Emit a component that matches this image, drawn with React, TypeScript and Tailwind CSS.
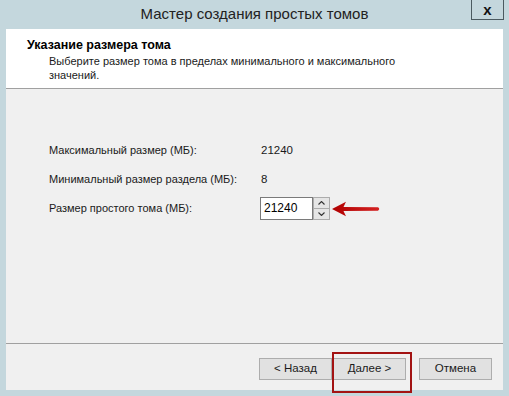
const FONT = { fontFamily: '"Liberation Sans", Arial, sans-serif' };

const Row = ({ label, children }: { label: string; children: React.ReactNode }) => (
  <div className="flex items-center h-[23px]">
    <div className="w-[211px] whitespace-nowrap">{label}</div>
    <div className="flex items-center">{children}</div>
  </div>
);

const Spinner = () => (
  <div className="flex flex-col w-[17px] h-[23px]">
    <div className="flex-1 flex items-center justify-center bg-[#e5e5e5] border border-[#acacac]">
      <svg width="7" height="4" viewBox="0 0 7 4">
        <path d="M0.5 3.5 L3.5 0.5 L6.5 3.5" fill="none" stroke="#333" strokeWidth="1.1" />
      </svg>
    </div>
    <div className="flex-1 flex items-center justify-center bg-[#e5e5e5] border border-t-0 border-[#acacac]">
      <svg width="7" height="4" viewBox="0 0 7 4">
        <path d="M0.5 0.5 L3.5 3.5 L6.5 0.5" fill="none" stroke="#333" strokeWidth="1.1" />
      </svg>
    </div>
  </div>
);

const Arrow = () => (
  <svg width="50" height="16" viewBox="0 0 50 16" className="ml-[1px]">
    <defs>
      <linearGradient id="shaft" x1="0" x2="1" y1="0" y2="0">
        <stop offset="0" stopColor="#b00000" />
        <stop offset="1" stopColor="#d42222" />
      </linearGradient>
    </defs>
    <path d="M1 8 L15 0.8 L12.5 6 L47 6.3 Q49.5 8 47 9.7 L12.5 10 L15 15.2 Z" fill="url(#shaft)" />
  </svg>
);

const Button = ({ children }: { children: React.ReactNode }) => (
  <button className="w-[73px] h-[22px] bg-[#e1e1e1] border border-[#adadad] text-[11.5px] text-[#1a1a1a] flex items-center justify-center">
    {children}
  </button>
);

export default function App() {
  return (
    <div className="w-[509px] h-[396px] bg-[#c4d7dd] flex flex-col text-[11px] text-[#1a1a1a] overflow-hidden" style={FONT}>
      <div className="h-[29px] flex relative">
        <div className="flex-1 text-center text-[15px] leading-[28px] text-[#222]">Мастер создания простых томов</div>
        <div className="absolute right-[5px] top-0 w-[33px] h-[20px] border border-t-0 border-[#4b5a60] flex items-center justify-center font-bold text-[15px] leading-none text-[#111]">
          x
        </div>
      </div>
      <div className="mx-[6px] w-[497px] h-[361px] flex flex-col bg-[#f0f0f0]">
        <div className="h-[60px] bg-white border-b border-[#a0a0a0] pt-[8px] pl-[21px]">
          <div className="font-bold text-[12.5px] leading-[16px] text-black">Указание размера тома</div>
          <div className="pl-[22px] leading-[14px] mt-[1px]">
            Выберите размер тома в пределах минимального и максимального
            <br />
            значений.
          </div>
        </div>
        <div className="flex-1 pt-[50px] pl-[43px] flex flex-col gap-[6px] border-b border-[#a0a0a0]">
          <Row label="Максимальный размер (МБ):">
            <span className="pl-[1px] text-[11.5px]">21240</span>
          </Row>
          <Row label="Минимальный размер раздела (МБ):">
            <span className="pl-[1px] text-[11.5px]">8</span>
          </Row>
          <Row label="Размер простого тома (МБ):">
            <div className="w-[53px] h-[23px] bg-white border border-[#7a7a7a] pl-[3px] text-[12px] leading-[21px] text-black">
              21240
            </div>
            <Spinner />
            <Arrow />
          </Row>
        </div>
        <div className="h-[46px] flex items-start justify-end pt-[14px] pr-[11px]">
          <Button>&lt; Назад</Button>
          <div className="relative ml-[1px]">
            <Button>Далее &gt;</Button>
            <div className="absolute left-[-1px] top-[-6px] w-[80px] h-[41px] border-2 border-[#a31313]" />
          </div>
          <div className="ml-[13px]">
            <Button>Отмена</Button>
          </div>
        </div>
      </div>
    </div>
  );
}
